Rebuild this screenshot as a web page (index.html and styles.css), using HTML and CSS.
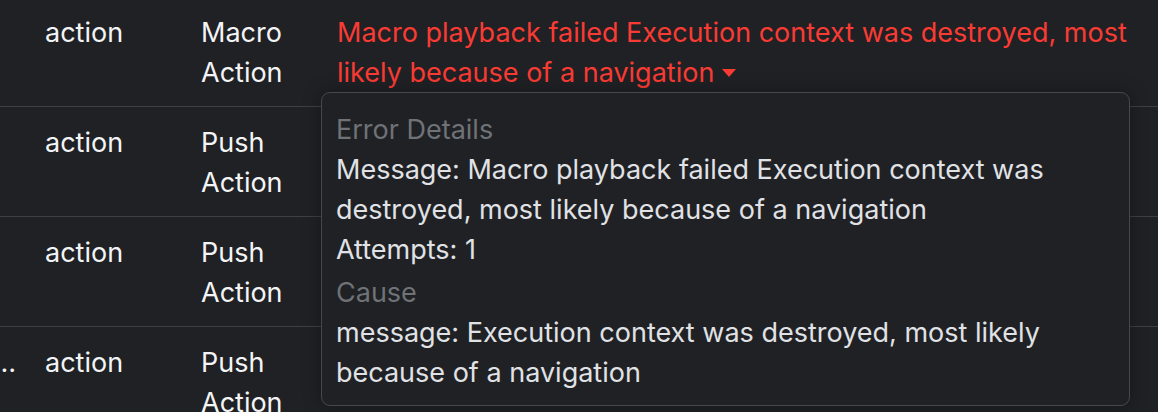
FILE: index.html
```html
<!DOCTYPE html>
<html>

<head lang="en">
    <meta charset="UTF-8">
    <meta name="viewport" content="width=device-width, initial-scale=1.0">
    <title>Execution log</title>
    <link rel="stylesheet" href="styles.css">
</head>

<body>
    <div class="log-wrap">
        <table class="log">
            <colgroup>
                <col class="c-time">
                <col class="c-type">
                <col class="c-name">
                <col class="c-result">
                <col class="c-extra">
            </colgroup>
            <tbody>
                <tr>
                    <td class="time">Step 4</td>
                    <td>action</td>
                    <td>Macro Action</td>
                    <td class="result">
                        <span class="error">Macro playback failed Execution context was destroyed, most likely because of a navigation <span class="caret"></span></span>
                        <div class="popover">
                            <div class="pop-title">Error Details</div>
                            <div>Message: Macro playback failed Execution context was destroyed, most likely because of a navigation</div>
                            <div>Attempts: 1</div>
                            <div class="pop-title cause">Cause</div>
                            <div>message: Execution context was destroyed, most likely because of a navigation</div>
                        </div>
                    </td>
                    <td></td>
                </tr>
                <tr>
                    <td class="time">Step 3</td>
                    <td>action</td>
                    <td>Push Action</td>
                    <td class="result"></td>
                    <td></td>
                </tr>
                <tr>
                    <td class="time">Step 2</td>
                    <td>action</td>
                    <td>Push Action</td>
                    <td class="result"></td>
                    <td></td>
                </tr>
                <tr>
                    <td class="time">Step 1 - Open login page</td>
                    <td>action</td>
                    <td>Push Action</td>
                    <td class="result"></td>
                    <td></td>
                </tr>
            </tbody>
        </table>
    </div>
</body>

</html>
```

FILE: styles.css
```css
* {
    margin: 0;
    padding: 0;
    box-sizing: border-box;
}

html,
body {
    background-color: #1f2125;
    overflow: hidden;
}

body {
    font-family: Inter, "Noto Sans", sans-serif;
    font-size: 27px;
    line-height: 40px;
    color: #f3f4f5;
    height: 412px;
}

/* table is scrolled sideways, first column mostly out of view */
.log-wrap {
    margin: -3px 0 0 -120px;
}

.log {
    border-collapse: collapse;
    table-layout: fixed;
    width: 1350px;
}

.c-time {
    width: 149px;
}

.c-type {
    width: 156px;
}

.c-name {
    width: 136px;
}

.c-result {
    width: 832px;
}

.log td {
    padding: 16px 16px 13px;
    vertical-align: top;
    border-bottom: 1px solid #3d4044;
}

.log td.time {
    white-space: nowrap;
    overflow: hidden;
    text-overflow: ellipsis;
    padding-right: 10px;
}

.log td.result {
    position: relative;
}

.error {
    color: #fa3b33;
}

.caret {
    display: inline-block;
    width: 0;
    height: 0;
    border-left: 7px solid transparent;
    border-right: 7px solid transparent;
    border-top: 8px solid #fa3b33;
    vertical-align: 5px;
}

.popover {
    position: absolute;
    top: 95px;
    left: 0;
    width: 809px;
    padding: 17px 14px 12px;
    background-color: #1f2125;
    border: 1px solid #45484d;
    border-radius: 9px;
    box-shadow: 0 0 18px rgba(0, 0, 0, 0.35);
    color: #e0e2e5;
    z-index: 2;
}

.pop-title {
    color: #6f7276;
}

.pop-title.cause {
    margin-top: 3px;
}
```
